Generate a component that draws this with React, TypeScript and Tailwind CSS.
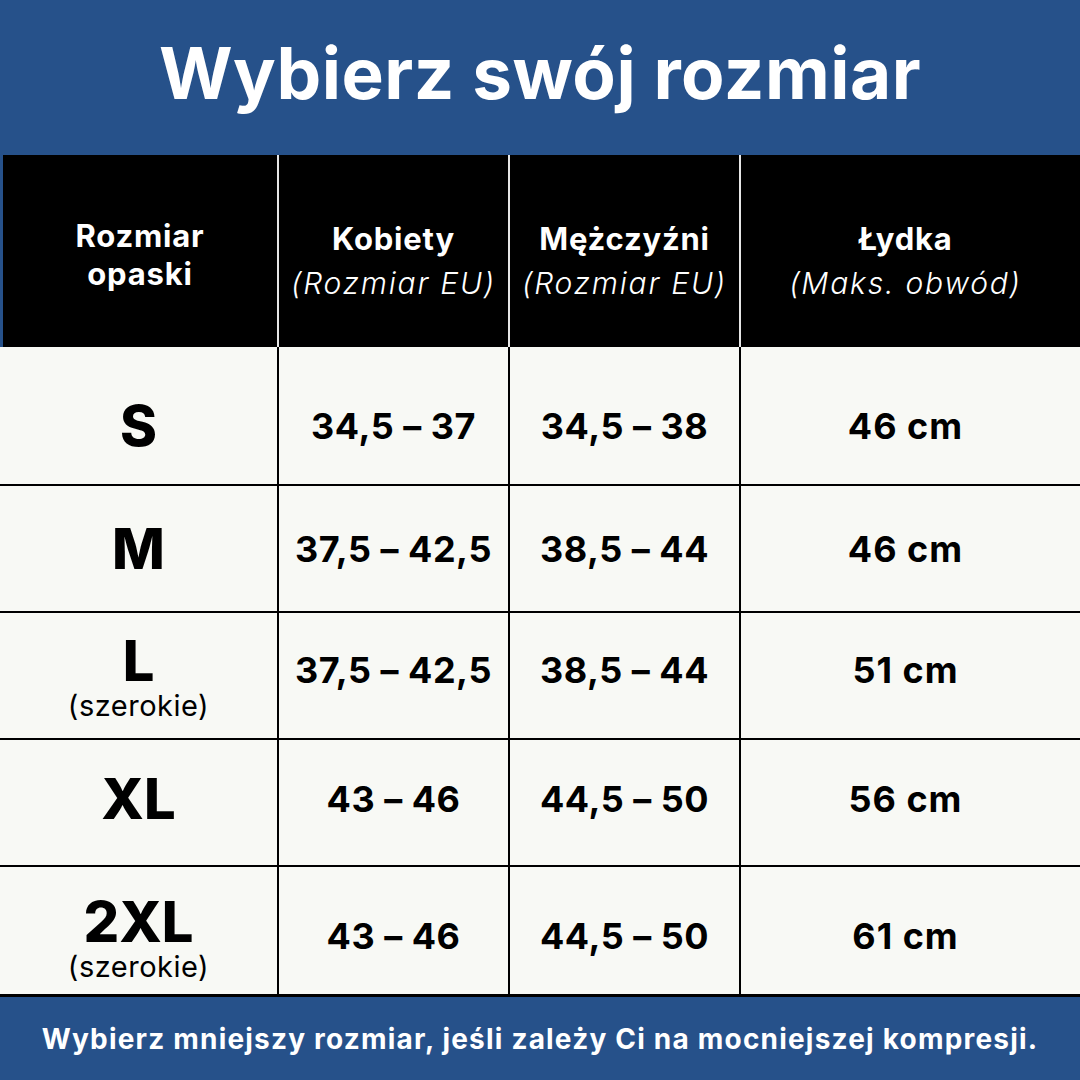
import React from "react";

const rows = [
  { size: "S", sub: "", k: "34,5 – 37", m: "34,5 – 38", l: "46 cm", h: "h-[139px]", v: "pt-[20px]", s: "pt-[20px]" },
  { size: "M", sub: "", k: "37,5 – 42,5", m: "38,5 – 44", l: "46 cm", h: "h-[127px]", v: "", s: "" },
  { size: "L", sub: "(szerokie)", k: "37,5 – 42,5", m: "38,5 – 44", l: "51 cm", h: "h-[127px]", v: "pb-[12px]", s: "pt-[4px]" },
  { size: "XL", sub: "", k: "43 – 46", m: "44,5 – 50", l: "56 cm", h: "h-[127px]", v: "pb-[8px]", s: "pb-[8px]" },
  { size: "2XL", sub: "(szerokie)", k: "43 – 46", m: "44,5 – 50", l: "61 cm", h: "h-[130px]", v: "pt-[10px]", s: "pt-[16px]" },
];

export default function App() {
  return (
    <div className="w-[1080px] h-[1080px] flex flex-col bg-[#f8f9f5] text-black" style={{ fontFamily: "Inter, 'Liberation Sans', sans-serif" }}>
      <div className="h-[155px] bg-[#26518a] flex items-center justify-center">
        <h1 className="text-white font-bold text-[71px] leading-none tracking-[0.5px] pb-[8px]">Wybierz swój rozmiar</h1>
      </div>
      <div className="h-[192px] bg-black border-l-[3px] border-[#26518a] flex text-white">
        <div className="w-[274px] flex flex-col items-center justify-center font-bold text-[31px] leading-[38px] tracking-[0.8px] pt-[8px]">
          <span>Rozmiar</span>
          <span>opaski</span>
        </div>
        <div className="w-[231px] border-l-2 border-[#e6e6e6] flex flex-col items-center justify-center pt-[20px]">
          <span className="font-bold text-[31px] leading-[45px] tracking-[0.8px]">Kobiety</span>
          <span className="italic font-light text-[30px] leading-[45px] tracking-[1.8px] whitespace-nowrap">(Rozmiar EU)</span>
        </div>
        <div className="w-[231px] border-l-2 border-[#e6e6e6] flex flex-col items-center justify-center pt-[20px]">
          <span className="font-bold text-[31px] leading-[45px] tracking-[0.8px]">Mężczyźni</span>
          <span className="italic font-light text-[30px] leading-[45px] tracking-[1.8px] whitespace-nowrap">(Rozmiar EU)</span>
        </div>
        <div className="flex-1 border-l-2 border-[#e6e6e6] flex flex-col items-center justify-center pt-[20px] pr-[10px]">
          <span className="font-bold text-[31px] leading-[45px] tracking-[0.8px]">Łydka</span>
          <span className="italic font-light text-[30px] leading-[45px] tracking-[1.8px] whitespace-nowrap">(Maks. obwód)</span>
        </div>
      </div>
      {rows.map((r, i) => (
        <div key={r.size} className={`${r.h} flex ${i < rows.length - 1 ? "border-b-2" : "border-b-[3px]"} border-black`}>
          <div className={`w-[277px] flex flex-col items-center justify-center ${r.s}`}>
            <span className="font-extrabold text-[56px] leading-[56px]">{r.size}</span>
            {r.sub && <span className="font-normal text-[29px] leading-[34px] tracking-[0.5px]">{r.sub}</span>}
          </div>
          <div className={`w-[231px] border-l-2 border-black flex items-center justify-center font-bold text-[36px] tracking-[0.5px] whitespace-nowrap ${r.v}`}>{r.k}</div>
          <div className={`w-[231px] border-l-2 border-black flex items-center justify-center font-bold text-[36px] tracking-[0.5px] whitespace-nowrap ${r.v}`}>{r.m}</div>
          <div className={`flex-1 border-l-2 border-black flex items-center justify-center font-bold text-[36px] tracking-[1px] whitespace-nowrap pr-[10px] ${r.v}`}>{r.l}</div>
        </div>
      ))}
      <div className="flex-1 bg-[#26518a] flex items-center justify-center">
        <span className="text-white font-bold text-[28px] tracking-[1.2px] whitespace-nowrap">Wybierz mniejszy rozmiar, jeśli zależy Ci na mocniejszej kompresji.</span>
      </div>
    </div>
  );
}
